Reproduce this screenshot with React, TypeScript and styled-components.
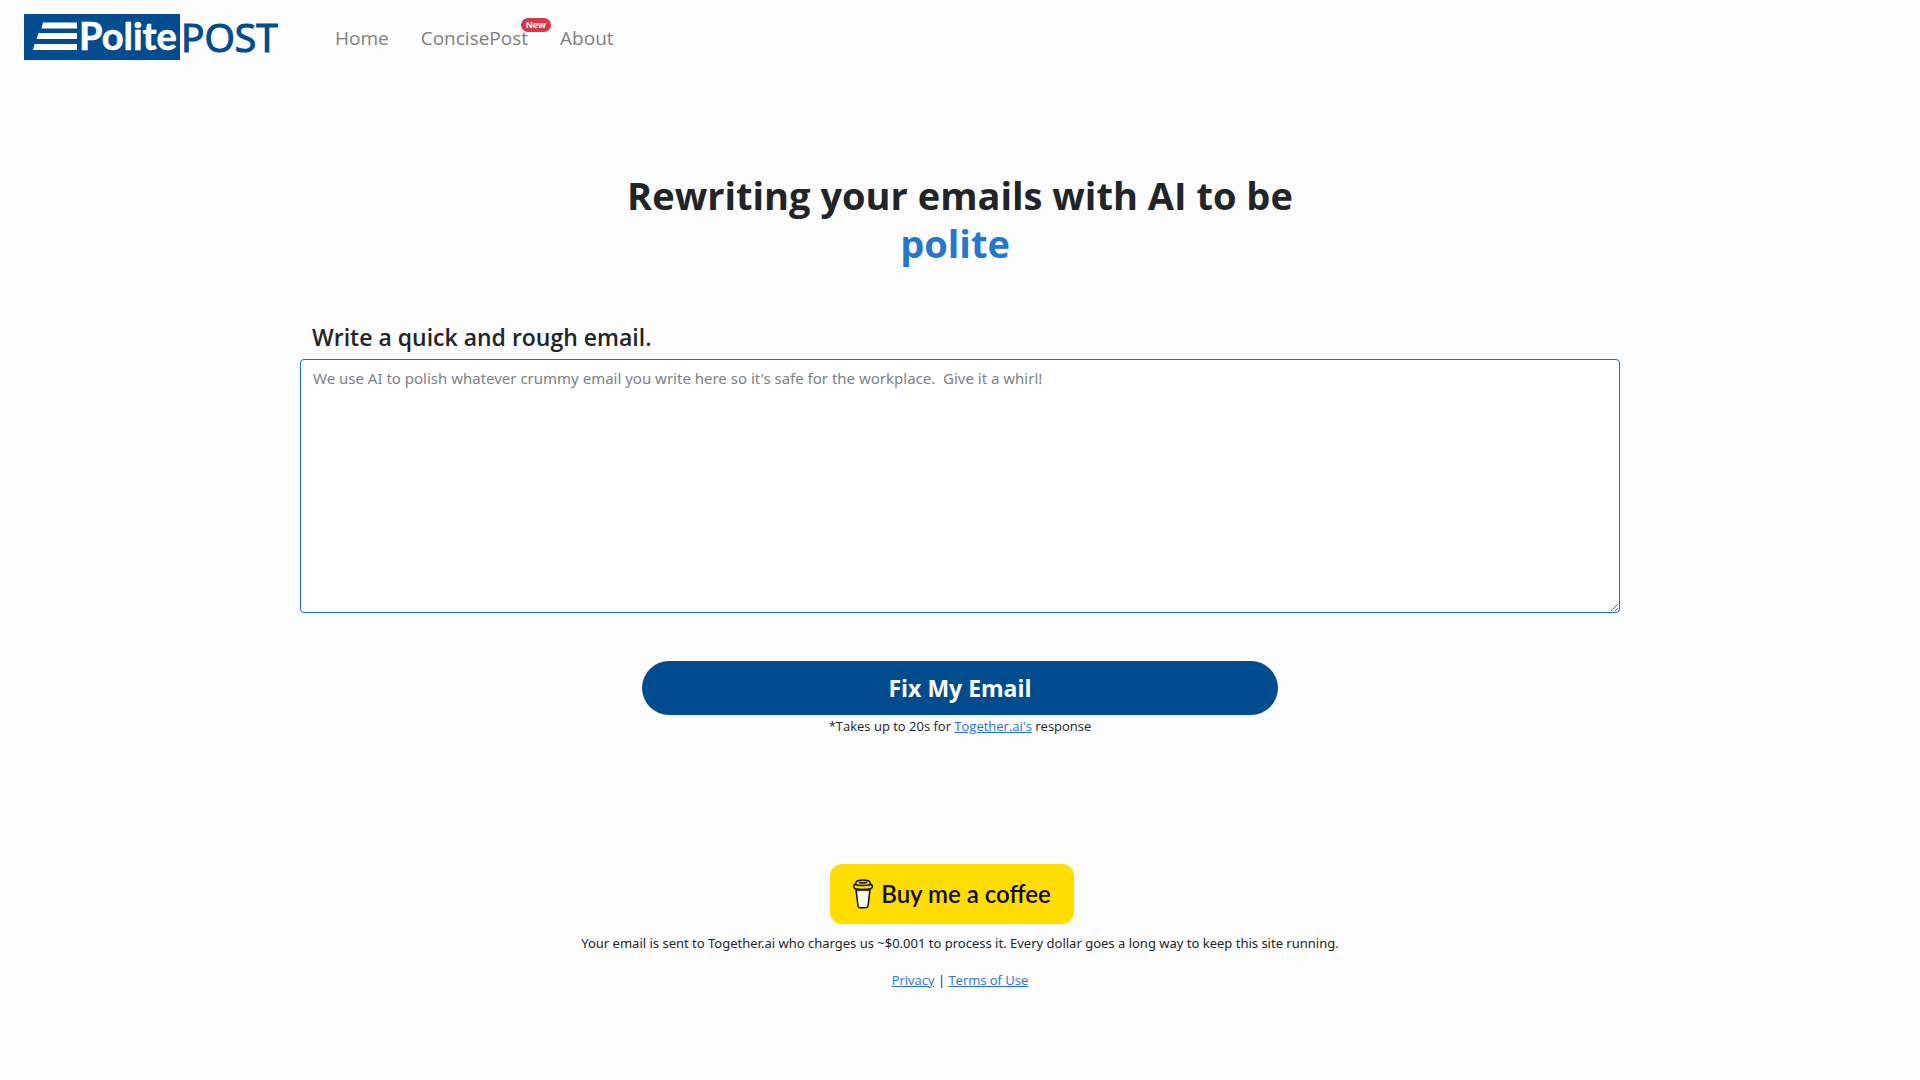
import React, { useState } from "react";
import styled, { createGlobalStyle } from "styled-components";

const GlobalStyle = createGlobalStyle`
  *, *::before, *::after { box-sizing: border-box; }
  body {
    margin: 0;
    background: #fefefe;
    color: #212529;
    font-family: "Segoe UI", "Open Sans", "Noto Sans", sans-serif;
    font-size: 16px;
    line-height: 24px;
  }
`;

const Page = styled.div`
  background: #fcfcfc;
  padding-bottom: 32px;
`;

const Header = styled.header`
  display: flex;
  align-items: center;
  padding: 8px 24px;
`;

const Brand = styled.a`
  display: block;
  line-height: 0;
  margin-right: 51px;
`;

const Nav = styled.nav`
  display: flex;
  gap: 32px;
  padding-top: 2px;
`;

const NavLink = styled.a`
  position: relative;
  color: #808080;
  font-size: 19px;
  line-height: 28px;
  text-decoration: none;
`;

const Badge = styled.span`
  position: absolute;
  top: -6px;
  right: -23px;
  padding: 0 5px;
  border-radius: 8px;
  background: #dc3545;
  color: #fff;
  font-size: 9px;
  font-weight: 700;
  line-height: 14px;
`;

const Main = styled.main`
  max-width: 1320px;
  margin: 0 auto;
  padding-top: 97px;
  display: flex;
  flex-direction: column;
  align-items: center;
`;

const Title = styled.h1`
  margin: 0 0 48px;
  font-size: 38px;
  font-weight: 700;
  line-height: 48px;
  text-align: center;
`;

const Highlight = styled.span`
  display: block;
  padding-right: 10px;
  color: #2477cc;
`;

const Form = styled.form`
  width: 100%;
  display: flex;
  flex-direction: column;
  align-items: center;
`;

const Label = styled.label`
  align-self: flex-start;
  padding: 6px 12px 2px;
  font-size: 23px;
  font-weight: 600;
  line-height: 32px;
  margin-bottom: 4px;
`;

const EmailBox = styled.textarea`
  display: block;
  width: 100%;
  height: 254px;
  margin-bottom: 48px;
  padding: 6px 12px;
  border: 1px solid #1b6ec2;
  border-radius: 4px;
  background: #fff;
  color: #212529;
  font: inherit;
  font-family: "Segoe UI", "Noto Sans", sans-serif;
  font-size: 15px;
  outline: none;
  resize: vertical;
  &::placeholder { color: #7b8187; opacity: 1; }
`;

const Submit = styled.button`
  width: 100%;
  max-width: 636px;
  padding: 12px;
  border: 0;
  border-radius: 27px;
  background: #004c8f;
  color: #fff;
  font-family: inherit;
  font-size: 23px;
  font-weight: 700;
  line-height: 30px;
  cursor: pointer;
`;

const Small = styled.p`
  margin: 0;
  font-size: 13px;
  line-height: 22px;
  text-align: center;
`;

const CostNote = styled(Small)`
  font-family: "Segoe UI", "Noto Sans", sans-serif;
`;

const TextLink = styled.a`
  color: #2a72d4;
`;

const Footer = styled.footer`
  display: flex;
  flex-direction: column;
  align-items: center;
  padding-top: 127px;
`;

const Coffee = styled.a`
  display: flex;
  align-items: center;
  justify-content: center;
  gap: 8px;
  height: 60px;
  min-width: 244px;
  margin: 0 16px 8px 0;
  border-radius: 12px;
  background: #ffdd00;
  color: #0d0c22;
  font-family: Lato, sans-serif;
  font-size: 24px;
  font-weight: 600;
  text-decoration: none;
`;

const Legal = styled(Small)`
  margin-top: 15px;
`;

const LogoArt = styled.svg`
  display: block;
  overflow: visible;
`;

const Logo = () => (
  <LogoArt width="260" height="58" viewBox="0 -4 260 58" role="img" aria-label="PolitePost">
    <rect x="0" y="2" width="156" height="46" fill="#004c8f" />
    <path d="M19 10.500h34v6H17.500zM14.500 21H53v6H12.500zM10.500 32H53v6H9z" fill="#fff" />
    <text x="55" y="38" fill="#fff" stroke="#fff" strokeWidth="0.600" fontFamily="Lato" fontWeight="700" fontSize="38">Polite</text>
    <text x="157" y="40" fill="#004c8f" stroke="#004c8f" strokeWidth="1.200" fontFamily="Open Sans" fontWeight="400" fontSize="39">POST</text>
  </LogoArt>
);

const Cup = () => (
  <svg width="20" height="30" viewBox="0 0 20 30" fill="none" stroke="#0d0c22" strokeWidth="1.500" strokeLinejoin="round" strokeLinecap="round" aria-hidden="true">
    <path d="M3 11l2 16q.2 1.800 2.200 1.800h5.600q2 0 2.200-1.800l2-16z" fill="#ffdd00" />
    <path d="M4.500 13.500q5.500-2 11-.5l-1.500 13q-.3 2-2 2H8q-1.700 0-2-2z" fill="#fff" stroke="none" />
    <path d="M1.500 5.500Q.2 7 1 8.600q.8 1.200 2.500 1.400 6.500.8 13 0 1.700-.2 2.500-1.400.8-1.600-.5-3.100Q10 7.500 1.500 5.500z" fill="#ffdd00" />
    <path d="M2.500 5.300Q2.800 2.500 4.500 1.800q5.500-1.600 11 0 1.700.7 2 3.500" />
    <path d="M6.500 3.600q3.500.9 7 0" />
  </svg>
);

export default function App() {
  const [email, setEmail] = useState("");
  return (
    <>
      <GlobalStyle />
      <Page>
        <Header>
          <Brand href="#"><Logo /></Brand>
          <Nav>
            <NavLink href="#">Home</NavLink>
            <NavLink href="#concise">ConcisePost<Badge>New</Badge></NavLink>
            <NavLink href="#about">About</NavLink>
          </Nav>
        </Header>
        <Main>
          <Title>
            Rewriting your emails with AI to be
            <Highlight>polite</Highlight>
          </Title>
          <Form onSubmit={(e) => e.preventDefault()}>
            <Label htmlFor="email">Write a quick and rough email.</Label>
            <EmailBox
              id="email"
              value={email}
              onChange={(e) => setEmail(e.target.value)}
              placeholder={"We use AI to polish whatever crummy email you write here so it's safe for the workplace.\u00a0 Give it a whirl!"}
            />
            <Submit type="submit">Fix My Email</Submit>
            <Small>*Takes up to 20s for <TextLink href="#together">Together.ai's</TextLink> response</Small>
          </Form>
        </Main>
        <Footer>
          <Coffee href="#coffee"><Cup />Buy me a coffee</Coffee>
          <CostNote>Your email is sent to Together.ai who charges us ~$0.001 to process it. Every dollar goes a long way to keep this site running.</CostNote>
          <Legal><TextLink href="#privacy">Privacy</TextLink> | <TextLink href="#terms">Terms of Use</TextLink></Legal>
        </Footer>
      </Page>
    </>
  );
}
